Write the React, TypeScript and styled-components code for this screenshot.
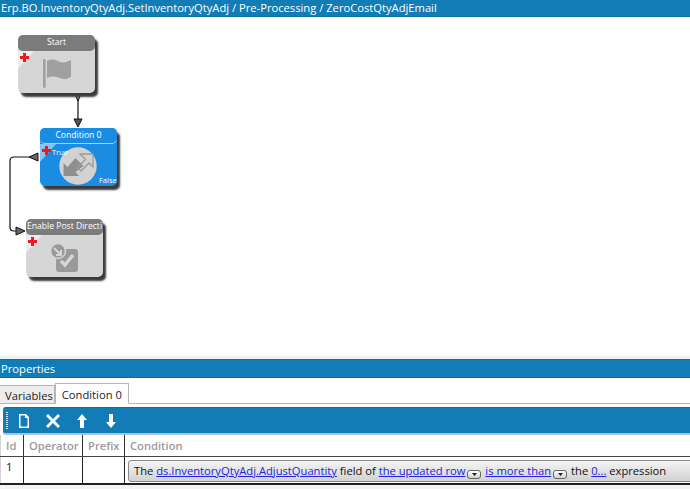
import styled, { createGlobalStyle } from 'styled-components'

const FONT = '"Open Sans", "Noto Sans", sans-serif'

const GlobalStyle = createGlobalStyle`
  html, body {
    margin: 0;
    padding: 0;
    background: #fff;
  }
  body {
    font-family: ${FONT};
    font-size: 11.2px;
    color: #111;
    overflow: hidden;
  }
`

function PlusMark () {
  return (
    <svg width="9" height="9" viewBox="0 0 9 9">
      <path d="M3 0h3v3h3v3H6v3H3V6H0V3h3z" fill="#f01922" />
    </svg>
  )
}

function FlagIcon () {
  return (
    <svg width="28" height="29" viewBox="0 0 28 29">
      <rect x="0" y="0" width="2.6" height="29" rx="1.3" fill="#a0a0a0" />
      <path d="M4 2c6-3 9-1 13 1 4 1 7 0 11-2v17c-4 2-7 3-11 1-4-2-8-2-13 0z" fill="#a0a0a0" />
    </svg>
  )
}

function ConditionIcon () {
  return (
    <svg width="38" height="38" viewBox="0 0 38 38">
      <circle cx="19" cy="19" r="18.7" fill="#d2d2d2" />
      <path d="M4.5 29V16l4 4 8-9 8 8-8 6 3.5 4z" fill="#8f8f8f" />
      <path d="M21 7h13v13l-4-4-8 8-3.5-3.5 8-8z" fill="none" stroke="#9a9a9a" strokeWidth="1.3" />
    </svg>
  )
}

function PostDirectiveIcon () {
  return (
    <svg width="28" height="30" viewBox="0 0 28 30">
      <rect x="6" y="6" width="22" height="23" rx="3" fill="#9a9a9a" />
      <path d="M11 18l4 4 8-10" fill="none" stroke="#d6d6d6" strokeWidth="3.5" />
      <circle cx="8" cy="8" r="7.5" fill="#9a9a9a" stroke="#d6d6d6" strokeWidth="1.5" />
      <path d="M4 5l7 7M11 7v5H6" fill="none" stroke="#d6d6d6" strokeWidth="2" />
    </svg>
  )
}

function Connectors () {
  return (
    <ConnectorLayer width="120" height="240" viewBox="0 0 120 240">
      <path d="M78 96V122" stroke="#111" strokeWidth="1.2" fill="none" />
      <path d="M75 94h6l-3 7z" fill="#8a8a8a" stroke="#111" strokeWidth="1" />
      <path d="M74 119h8l-4 8z" fill="#555" stroke="#111" strokeWidth="1" />
      <path d="M31 157H14q-4 0-4 4v66q0 4 4 4h3" stroke="#111" strokeWidth="1.2" fill="none" />
      <path d="M38 153v8l-9-4z" fill="#666" stroke="#111" strokeWidth="1" />
      <path d="M16 227v8l9-4z" fill="#666" stroke="#111" strokeWidth="1" />
    </ConnectorLayer>
  )
}

function SmallDrop () {
  return (
    <DropButton>
      <svg width="5" height="3" viewBox="0 0 5 3"><path d="M0 0h5L2.5 3z" fill="#222" /></svg>
    </DropButton>
  )
}

function ToolIcon ({ d }: { d: string }) {
  return (
    <ToolSlot>
      <svg width="16" height="16" viewBox="0 0 16 16"><path d={d} fill="#fff" fillRule="evenodd" /></svg>
    </ToolSlot>
  )
}

export default function App () {
  return (
    <Page>
      <GlobalStyle />
      <TitleBar>Erp.BO.InventoryQtyAdj.SetInventoryQtyAdj / Pre-Processing / ZeroCostQtyAdjEmail</TitleBar>
      <Canvas>
        <Connectors />
        <Node $x={18} $y={18}>
          <NodeHeader>Start</NodeHeader>
          <NodeBody>
            <Corner />
            <PlusSlot><PlusMark /></PlusSlot>
            <NodeIcon $x={25} $y={8}><FlagIcon /></NodeIcon>
          </NodeBody>
        </Node>
        <Node $x={40} $y={111} $active>
          <NodeHeader $active>Condition 0</NodeHeader>
          <NodeBody>
            <Corner $active />
            <PlusSlot><PlusMark /></PlusSlot>
            <NodeIcon $x={19} $y={3}><ConditionIcon /></NodeIcon>
            <PortLabel $left={12} $top={2}>True</PortLabel>
            <PortLabel $left={59} $top={30}>False</PortLabel>
          </NodeBody>
        </Node>
        <Node $x={26} $y={202}>
          <NodeHeader>Enable Post Directi</NodeHeader>
          <NodeBody>
            <Corner />
            <PlusSlot><PlusMark /></PlusSlot>
            <NodeIcon $x={24} $y={8}><PostDirectiveIcon /></NodeIcon>
          </NodeBody>
        </Node>
      </Canvas>
      <Splitter />
      <SectionBar>Properties</SectionBar>
      <TabRow>
        <Tab>Variables</Tab>
        <Tab $selected>Condition 0</Tab>
      </TabRow>
      <Toolbar>
        <Grip />
        <ToolIcon d="M3 1h7l3 3v11H3zM4.5 2.5v11h7V5H9V2.5z" />
        <ToolIcon d="M3 1l5 5 5-5 2 2-5 5 5 5-2 2-5-5-5 5-2-2 5-5-5-5z" />
        <ToolIcon d="M8 1l5 6h-3v8H6V7H3z" />
        <ToolIcon d="M6 1h4v8h3l-5 6-5-6h3z" />
      </Toolbar>
      <Table>
        <thead>
          <tr>
            <HeadCell $w={23}>Id</HeadCell>
            <HeadCell $w={59}>Operator</HeadCell>
            <HeadCell $w={42}>Prefix</HeadCell>
            <HeadCell>Condition</HeadCell>
          </tr>
        </thead>
        <tbody>
          <tr>
            <BodyCell>1</BodyCell>
            <BodyCell />
            <BodyCell />
            <BodyCell>
              <Sentence>
                The <a href="#a">ds.InventoryQtyAdj.AdjustQuantity</a> field of <a href="#b">the updated row</a><SmallDrop /> <a href="#c">is more than</a><SmallDrop /> the <a href="#d">0...</a> expression
              </Sentence>
            </BodyCell>
          </tr>
        </tbody>
      </Table>
      <Footer />
    </Page>
  )
}

const Page = styled.div`
  width: 690px;
  height: 489px;
  display: flex;
  flex-direction: column;
  overflow: hidden;
  background: #fff;
`
const TitleBar = styled.div`
  height: 17px;
  flex: none;
  line-height: 16px;
  padding-left: 1px;
  background: #127cb6;
  border-bottom: 1px solid #0c6ea6;
  box-sizing: border-box;
  color: #fff;
  white-space: nowrap;
`
const Canvas = styled.div`
  position: relative;
  height: 339px;
  flex: none;
  background: #fff;
`
const ConnectorLayer = styled.svg`
  position: absolute;
  left: 0;
  top: -17px;
`
const Node = styled.div<{ $x: number; $y: number; $active?: boolean }>`
  position: absolute;
  left: ${p => p.$x}px;
  top: ${p => p.$y}px;
  width: 77px;
  height: 58px;
  border-radius: 5px;
  display: flex;
  flex-direction: column;
  background: ${p => (p.$active ? '#1a8ce2' : '#d6d6d6')};
  box-shadow: 3px 4px 2px #3a3a3a;
`
const NodeHeader = styled.div<{ $active?: boolean }>`
  height: 15px;
  flex: none;
  line-height: 15px;
  text-align: center;
  font-size: 8.6px;
  color: #fff;
  white-space: nowrap;
  background: ${p => (p.$active ? '#1a8ce2' : '#7b7b7b')};
  border-bottom: 1px solid ${p => (p.$active ? '#a8d4f4' : '#7b7b7b')};
  border-radius: 5px;
`
const NodeBody = styled.div`
  position: relative;
  flex: 1;
`
const Corner = styled.div<{ $active?: boolean }>`
  position: absolute;
  left: 0;
  top: 0;
  width: 0;
  height: 0;
  border-top: 18px solid ${p => (p.$active ? '#86c3f0' : '#ececec')};
  border-right: 16px solid transparent;
`
const PlusSlot = styled.span`
  position: absolute;
  left: 2px;
  top: 2px;
  line-height: 0;
`
const NodeIcon = styled.span<{ $x: number; $y: number }>`
  position: absolute;
  left: ${p => p.$x}px;
  top: ${p => p.$y}px;
  line-height: 0;
`
const PortLabel = styled.span<{ $left: number; $top: number }>`
  position: absolute;
  left: ${p => p.$left}px;
  top: ${p => p.$top}px;
  color: #fff;
  font-size: 7.5px;
  line-height: 12px;
`
const Splitter = styled.div`
  height: 3px;
  flex: none;
  background: #eef3fa;
`
const SectionBar = styled.div`
  height: 19px;
  flex: none;
  line-height: 17px;
  padding-left: 1px;
  box-sizing: border-box;
  background: #127cb6;
  border-top: 1px solid #0c6ea6;
  border-bottom: 1px solid #0c6ea6;
  color: #fff;
`
const TabRow = styled.div`
  height: 26px;
  flex: none;
  display: flex;
  align-items: flex-end;
  box-sizing: border-box;
  border-bottom: 1px solid #b5b5b5;
`
const Tab = styled.div<{ $selected?: boolean }>`
  height: ${p => (p.$selected ? 21 : 18)}px;
  line-height: ${p => (p.$selected ? 21 : 19)}px;
  padding: 0 ${p => (p.$selected ? '6px 0 6px' : '1px 0 5px')};
  box-sizing: border-box;
  color: #222;
  background: ${p => (p.$selected ? '#fff' : '#ededed')};
  border: 1px solid #b5b5b5;
  border-left: ${p => (p.$selected ? '1px solid #b5b5b5' : 'none')};
  border-bottom: ${p => (p.$selected ? '1px solid #fff' : 'none')};
  margin-bottom: ${p => (p.$selected ? -1 : 0)}px;
`
const Toolbar = styled.div`
  height: 28px;
  flex: none;
  margin: 3px 0 0 3px;
  display: flex;
  align-items: center;
  background: #127cb6;
  border-top: 1px solid #0c6ea6;
  border-bottom: 2px solid #a9c4da;
  border-radius: 3px 0 0 3px;
  box-sizing: border-box;
`
const Grip = styled.span`
  width: 2px;
  height: 18px;
  margin-left: 3px;
  margin-right: 1px;
  background: repeating-linear-gradient(to bottom, #d5e6f2 0 1px, transparent 1px 2px);
`
const ToolSlot = styled.span`
  width: 29px;
  height: 16px;
  display: flex;
  justify-content: center;
  line-height: 0;
`
const DropButton = styled.span`
  display: inline-flex;
  align-items: center;
  justify-content: center;
  width: 12px;
  height: 7px;
  margin: 0 1px 0 2px;
  vertical-align: -1px;
  border: 1px solid #666;
  border-radius: 3px;
  background: linear-gradient(#fff, #cfcfcf);
`
const Table = styled.table`
  width: 100%;
  flex: none;
  border-collapse: collapse;
  table-layout: fixed;
  border-left: 1px solid #d5d5d5;
`
const HeadCell = styled.th<{ $w?: number }>`
  ${p => (p.$w ? `width: ${p.$w}px;` : '')}
  height: 21px;
  padding: 0 0 0 5px;
  box-sizing: border-box;
  text-align: left;
  font-weight: 600;
  color: #9b9b9b;
  border-right: 1px solid #333;
  border-bottom: 1px solid #444;
  &:last-child { border-right: none; }
`
const BodyCell = styled.td`
  height: 28px;
  padding: 0;
  vertical-align: top;
  border-right: 1px solid #222;
  border-bottom: 2px solid #222;
  box-sizing: border-box;
  &:first-child { padding: 2px 0 0 5px; }
  &:last-child { border-right: none; }
`
const Sentence = styled.div`
  margin: 3px -10px 0 3px;
  height: 22px;
  line-height: 20px;
  padding-left: 5px;
  white-space: nowrap;
  box-sizing: border-box;
  border: 1px solid #8a8a8a;
  border-radius: 3px;
  background: linear-gradient(#f4f4f4, #d2d2d2);
  a { color: #2323e6; }
`
const Footer = styled.div`
  flex: 1;
  background: #f4f4f4;
`
